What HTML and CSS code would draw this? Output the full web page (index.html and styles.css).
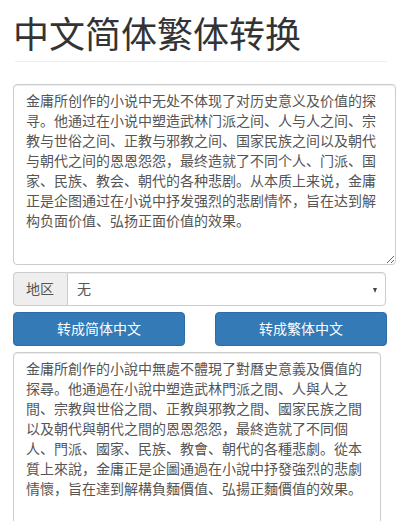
FILE: index.html
```html
<!DOCTYPE html>
<html lang="zh-CN">
<head>
<meta charset="utf-8">
<title>中文简体繁体转换</title>
<link rel="stylesheet" href="styles.css">
</head>
<body>
<div class="container">
  <div class="page-header"><h1>中文简体繁体转换</h1></div>
  <textarea class="form-control src">金庸所创作的小说中无处不体现了对历史意义及价值的探寻。他通过在小说中塑造武林门派之间、人与人之间、宗教与世俗之间、正教与邪教之间、国家民族之间以及朝代与朝代之间的恩恩怨怨，最终造就了不同个人、门派、国家、民族、教会、朝代的各种悲剧。从本质上来说，金庸正是企图通过在小说中抒发强烈的悲剧情怀，旨在达到解构负面价值、弘扬正面价值的效果。</textarea>
  <div class="input-group">
    <span class="addon">地区</span>
    <div class="select-wrap">
      <select class="form-control select"><option>无</option></select>
      <span class="arrow"></span>
    </div>
  </div>
  <div class="btn-row">
    <button class="btn">转成简体中文</button>
    <button class="btn">转成繁体中文</button>
  </div>
  <textarea class="form-control dst">金庸所創作的小說中無處不體現了對曆史意義及價值的探尋。他通過在小說中塑造武林門派之間、人與人之間、宗教與世俗之間、正教與邪教之間、國家民族之間以及朝代與朝代之間的恩恩怨怨，最終造就了不同個人、門派、國家、民族、教會、朝代的各種悲劇。從本質上來說，金庸正是企圖通過在小說中抒發強烈的悲劇情懷，旨在達到解構負麵價值、弘揚正麵價值的效果。</textarea>
</div>
</body>
</html>
```

FILE: styles.css
```css
* { box-sizing: border-box; }
html, body {
  margin: 0;
  padding: 0;
  background: #fff;
}
body {
  font-family: "Liberation Sans", "Noto Sans CJK SC", sans-serif;
  font-size: 14px;
  line-height: 20px;
  color: #333;
  overflow: hidden;
}
.container {
  padding: 0 0 0 13px;
  width: 400px;
}
.page-header {
  margin: 0 13px 22px 2px;
  padding: 12px 0 9px;
  border-bottom: 1px solid #eee;
}
.page-header h1 {
  margin: 0 0 0 -2px;
  font-size: 36px;
  line-height: 40px;
  font-weight: 400;
  color: #333;
  font-family: "Noto Sans CJK SC", sans-serif;
}
.form-control {
  display: block;
  font-family: "Liberation Sans", "Noto Sans CJK SC", sans-serif;
  font-size: 14px;
  line-height: 20px;
  color: #555;
  background: #fff;
  border: 1px solid #ccc;
  border-radius: 4px;
  box-shadow: inset 0 1px 1px rgba(0,0,0,.075);
  padding: 6px 12px;
  margin: 0;
}
textarea.form-control {
  resize: both;
  overflow: hidden;
}
.src {
  width: 383px;
  height: 181px;
  margin-bottom: 7px;
}
.dst {
  width: 368px;
  height: 182px;
}
.input-group {
  display: flex;
  width: 373px;
  height: 34px;
  margin-bottom: 6px;
}
.addon {
  flex: none;
  width: 54px;
  padding: 6px 12px;
  background: #eee;
  border: 1px solid #ccc;
  border-right: 0;
  border-radius: 4px 0 0 4px;
  color: #555;
  font-size: 14px;
  line-height: 20px;
}
.select-wrap {
  position: relative;
  flex: 1;
}
.select {
  -webkit-appearance: none;
  appearance: none;
  width: 100%;
  height: 34px;
  padding: 6px 9px;
  border-radius: 0 4px 4px 0;
  outline: none;
}
.arrow {
  position: absolute;
  right: 9px;
  top: 16px;
  width: 0;
  height: 0;
  border-left: 2.5px solid transparent;
  border-right: 2.5px solid transparent;
  border-top: 5px solid #444;
}
.btn-row {
  display: flex;
  gap: 30px;
  width: 374px;
  margin-bottom: 6px;
}
.btn {
  flex: 1;
  height: 34px;
  padding: 6px 12px;
  font-family: "Liberation Sans", "Noto Sans CJK SC", sans-serif;
  font-size: 14px;
  line-height: 20px;
  color: #fff;
  background: #337ab7;
  border: 1px solid #2e6da4;
  border-radius: 4px;
}
```
